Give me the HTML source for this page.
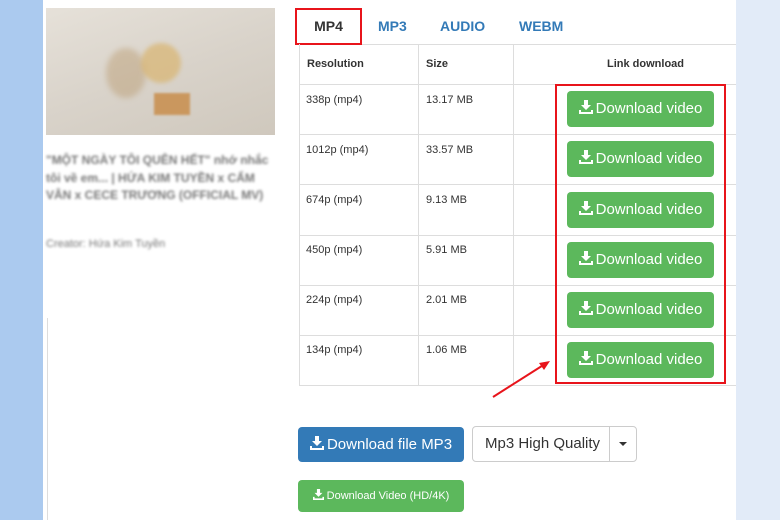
<!DOCTYPE html>
<html><head><style>
*{margin:0;padding:0;box-sizing:border-box}
body{width:780px;height:520px;overflow:hidden;background:#e2ebf8;font-family:"Liberation Sans",Arial,sans-serif;position:relative}
.lb{position:absolute;left:0;top:0;width:43px;height:520px;background:#abcaef}
.main{position:absolute;left:43px;top:0;width:693px;height:520px;background:#fff}
.abs{position:absolute}
.img{left:46px;top:8px;width:229px;height:127px;background:linear-gradient(160deg,#e6e1d9 0%,#d9d3ca 50%,#cfc8bd 100%)}
.blur{filter:blur(1.3px);color:#777;font-size:12px;line-height:17.5px;font-weight:bold}
.tab{font-size:14px;font-weight:bold;color:#337ab7;top:18px}
.cell{font-size:11px;color:#333}
.hl{background:#ddd;height:1px}
.btn{position:absolute;left:567px;width:147px;height:36px;background:#5cb85c;border-radius:4px;color:#fff;font-size:15px;line-height:36px;text-align:center}
.ic{display:inline-block;vertical-align:-1px;margin-right:3px}
</style></head><body>
<div class="lb"></div>
<div class="main"></div>
<div class="abs img">
<div class="abs" style="left:60px;top:40px;width:40px;height:50px;border-radius:50%;background:#b08a55;opacity:.35;filter:blur(3px)"></div>
<div class="abs" style="left:95px;top:35px;width:40px;height:40px;border-radius:50%;background:#d9b571;opacity:.7;filter:blur(2px)"></div>
<div class="abs" style="left:108px;top:85px;width:36px;height:22px;background:#c88a45;opacity:.8;filter:blur(1px)"></div>
</div>
<div class="abs blur" style="left:46px;top:152px;width:232px">"MỘT NGÀY TÔI QUÊN HẾT" nhớ nhắc tôi về em... | HỨA KIM TUYỀN x CẨM VÂN x CECE TRƯƠNG (OFFICIAL MV)</div>
<div class="abs blur" style="left:46px;top:236px;font-weight:normal;font-size:11px">Creator: Hứa Kim Tuyền</div>
<div class="abs" style="left:47px;top:318px;width:1px;height:202px;background:#ddd"></div>

<div class="abs" style="left:295px;top:8px;width:67px;height:37px;border:2px solid #e8141b;font-size:14px;font-weight:bold;color:#333;text-align:center;line-height:33px">MP4</div>
<div class="abs tab" style="left:378px">MP3</div>
<div class="abs tab" style="left:440px">AUDIO</div>
<div class="abs tab" style="left:519px">WEBM</div>
<div class="abs hl" style="left:362px;top:44px;width:374px"></div>

<div class="abs" style="left:299px;top:44px;width:1px;height:342px;background:#ddd"></div>
<div class="abs" style="left:418px;top:44px;width:1px;height:342px;background:#ddd"></div>
<div class="abs" style="left:513px;top:44px;width:1px;height:342px;background:#ddd"></div>
<div class="abs cell" style="left:307px;top:58px;font-weight:bold">Resolution</div>
<div class="abs cell" style="left:426px;top:58px;font-weight:bold">Size</div>
<div class="abs cell" style="left:607px;top:58px;font-weight:bold">Link download</div>

<div class="abs hl" style="left:299px;top:84px;width:437px"></div>
<div class="abs hl" style="left:299px;top:134px;width:437px"></div>
<div class="abs hl" style="left:299px;top:184px;width:437px"></div>
<div class="abs hl" style="left:299px;top:235px;width:437px"></div>
<div class="abs hl" style="left:299px;top:285px;width:437px"></div>
<div class="abs hl" style="left:299px;top:335px;width:437px"></div>
<div class="abs hl" style="left:299px;top:385px;width:437px"></div>

<div class="abs cell" style="left:306px;top:94px">338p (mp4)</div><div class="abs cell" style="left:426px;top:94px">13.17 MB</div>
<div class="abs cell" style="left:306px;top:144px">1012p (mp4)</div><div class="abs cell" style="left:426px;top:144px">33.57 MB</div>
<div class="abs cell" style="left:306px;top:194px">674p (mp4)</div><div class="abs cell" style="left:426px;top:194px">9.13 MB</div>
<div class="abs cell" style="left:306px;top:244px">450p (mp4)</div><div class="abs cell" style="left:426px;top:244px">5.91 MB</div>
<div class="abs cell" style="left:306px;top:294px">224p (mp4)</div><div class="abs cell" style="left:426px;top:294px">2.01 MB</div>
<div class="abs cell" style="left:306px;top:344px">134p (mp4)</div><div class="abs cell" style="left:426px;top:344px">1.06 MB</div>

<svg width="0" height="0" style="position:absolute"><defs><symbol id="dl" viewBox="0 0 14 14"><path d="M5 0h4v5h3l-5 5-5-5h3z M0 10h2v2h10v-2h2v4H0z" fill="#fff"/></symbol></defs></svg>
<div class="btn" style="top:91px"><svg class="ic" width="14" height="14"><use href="#dl"/></svg>Download video</div>
<div class="btn" style="top:141px"><svg class="ic" width="14" height="14"><use href="#dl"/></svg>Download video</div>
<div class="btn" style="top:192px"><svg class="ic" width="14" height="14"><use href="#dl"/></svg>Download video</div>
<div class="btn" style="top:242px"><svg class="ic" width="14" height="14"><use href="#dl"/></svg>Download video</div>
<div class="btn" style="top:292px"><svg class="ic" width="14" height="14"><use href="#dl"/></svg>Download video</div>
<div class="btn" style="top:342px"><svg class="ic" width="14" height="14"><use href="#dl"/></svg>Download video</div>
<div class="abs" style="left:555px;top:84px;width:171px;height:300px;border:2px solid #e8141b"></div>
<svg class="abs" style="left:490px;top:355px" width="65" height="45"><line x1="3" y1="42" x2="55" y2="9" stroke="#e8141b" stroke-width="2"/><path d="M60 6l-11 2 5 7z" fill="#e8141b"/></svg>

<div class="abs" style="left:298px;top:427px;width:166px;height:35px;background:#337ab7;border-radius:4px;color:#fff;font-size:15px;line-height:35px;text-align:center"><svg class="ic" width="14" height="14"><use href="#dl"/></svg>Download file MP3</div>
<div class="abs" style="left:472px;top:426px;width:165px;height:36px;border:1px solid #ccc;border-radius:4px;font-size:15px;color:#333;line-height:34px">
<span style="position:absolute;left:12px">Mp3 High Quality</span>
<span style="position:absolute;left:136px;top:0;width:1px;height:34px;background:#ccc"></span>
<span style="position:absolute;left:146px;top:15px;border-left:4px solid transparent;border-right:4px solid transparent;border-top:4px solid #333"></span>
</div>
<div class="abs" style="left:298px;top:480px;width:166px;height:32px;background:#5cb85c;border-radius:4px;color:#fff;font-size:11px;line-height:32px;text-align:center"><svg class="ic" width="11" height="11"><use href="#dl"/></svg>Download Video (HD/4K)</div>
</body></html>
